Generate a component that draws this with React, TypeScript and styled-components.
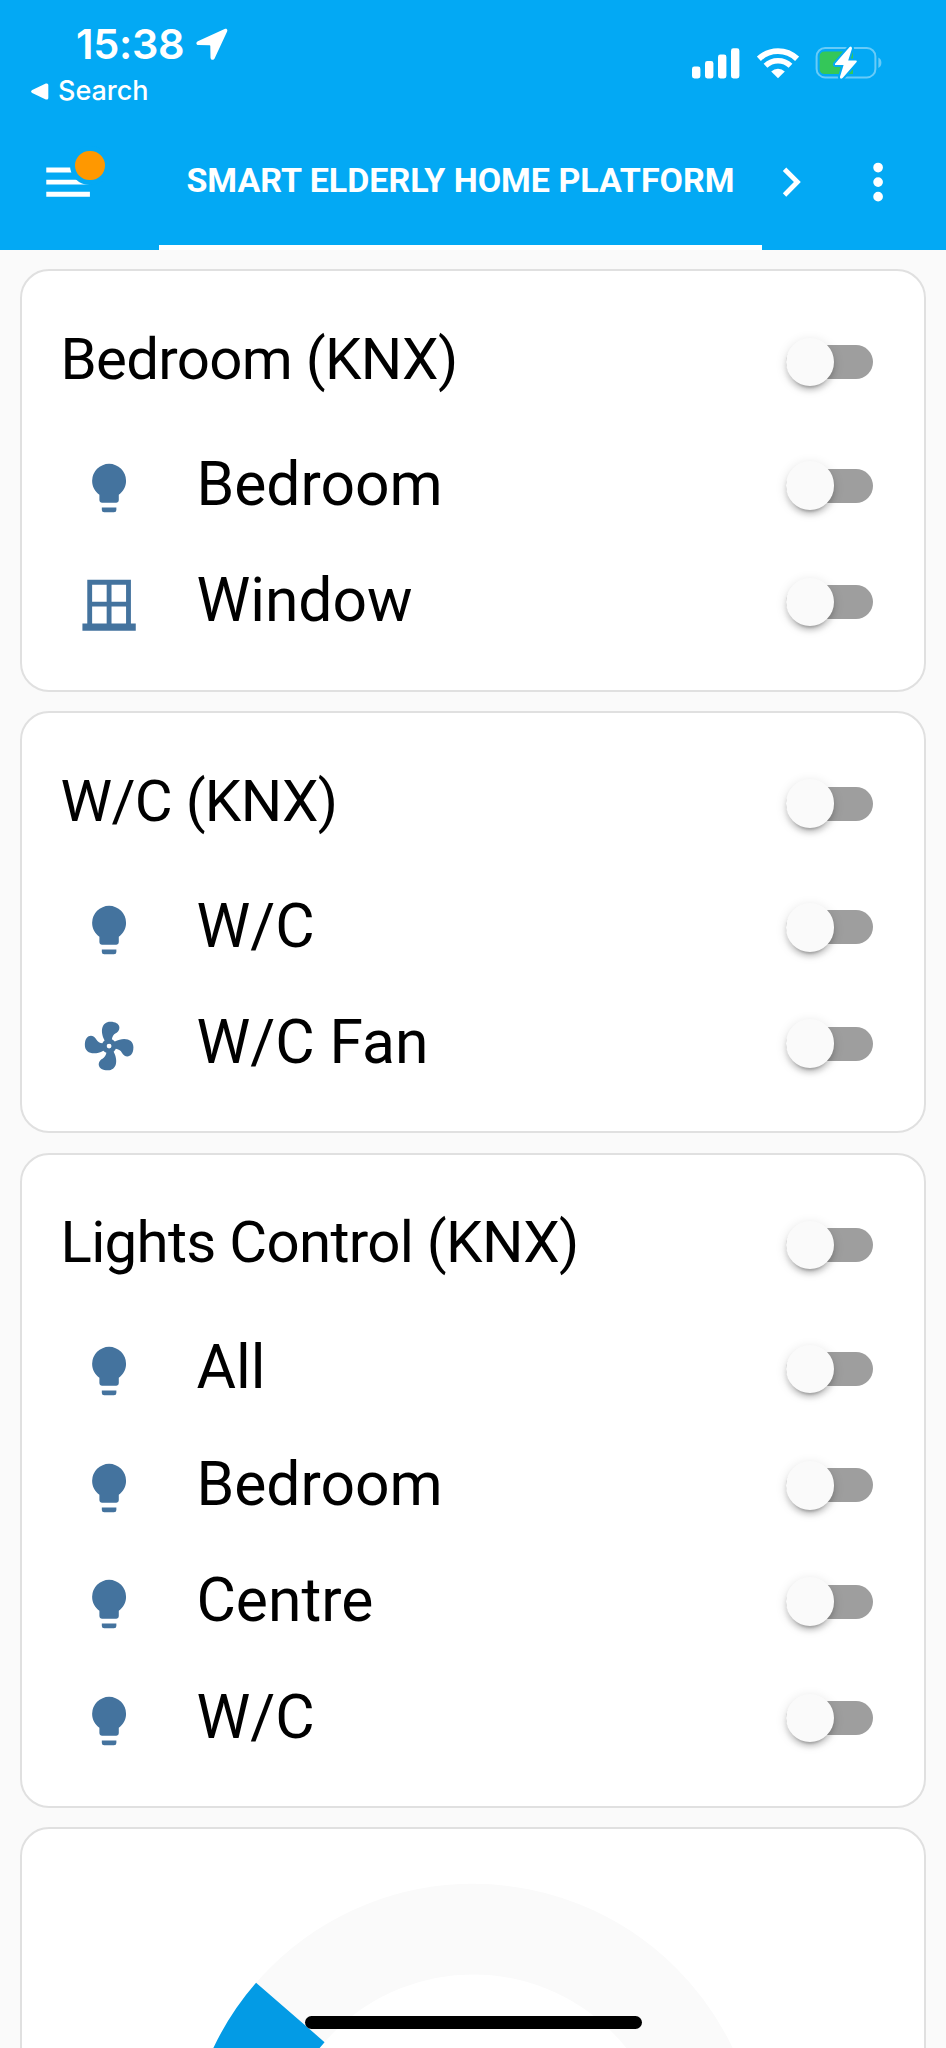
import React from "react";
import styled, { createGlobalStyle } from "styled-components";

const GlobalStyle = createGlobalStyle`
  *, *::before, *::after { box-sizing: border-box; }
  html, body { margin: 0; padding: 0; background: #fafafa; }
  body { font-family: Roboto, "Liberation Sans", sans-serif; color: #000; }
  svg { display: block; flex: none; }
`;

const Screen = styled.div`
  position: relative;
  width: 946px;
  height: 2048px;
  overflow: hidden;
  background: #fafafa;
`;

const Header = styled.header`
  height: 250px;
  background: #03a9f4;
  color: #fff;
`;

const StatusBar = styled.div`
  height: 114px;
  display: flex;
  justify-content: space-between;
  padding: 25px 63px 0 31px;
  font-family: Inter, "Liberation Sans", sans-serif;
`;

const Clock = styled.div`
  display: flex;
  align-items: center;
  gap: 12px;
  height: 38px;
  padding-left: 45px;
  font-size: 41.5px;
  font-weight: 600;
  line-height: 38px;
  letter-spacing: -0.3px;
`;

const BackLink = styled.div`
  display: flex;
  align-items: center;
  gap: 9px;
  height: 30px;
  margin-top: 13px;
  font-size: 27px;
  font-weight: 500;
  line-height: 30px;
  letter-spacing: -0.05px;
`;

const Indicators = styled.div`
  display: flex;
  align-items: center;
  height: 34px;
  margin-top: 21px;
`;

const Toolbar = styled.nav`
  height: 136px;
  display: flex;
  align-items: center;
`;

const MenuButton = styled.div`
  position: relative;
  width: 159px;
  padding-left: 38.7px;
`;

const Badge = styled.span`
  position: absolute;
  left: 70.2px;
  top: -7.1px;
  width: 39.4px;
  height: 39.4px;
  border-radius: 50%;
  border: 5px solid #03a9f4;
  background: #ff9800;
`;

const Tab = styled.div`
  width: 603px;
  height: 136px;
  padding-top: 1px;
  border-bottom: 5px solid #fff;
  display: flex;
  align-items: center;
  justify-content: center;
  font-size: 34px;
  font-weight: 700;
  white-space: nowrap;
`;

const Overflow = styled.div`
  margin-left: 28.6px;
`;

const Cards = styled.main`
  display: flex;
  flex-direction: column;
  gap: 19.4px;
  padding: 19.4px 20px 0;
`;

const Card = styled.section`
  border: 2.4px solid #e0e0e0;
  border-radius: 29px;
  background: #fff;
  padding: 25px 51px 29.5px 39.4px;
`;

const CardHeader = styled.div`
  height: 131px;
  display: flex;
  align-items: center;
  justify-content: space-between;
`;

const Title = styled.h1`
  margin: 0 0 0 -0.9px;
  padding-bottom: 6px;
  font-size: 58.2px;
  font-weight: 400;
  line-height: 72px;
  letter-spacing: -0.7px;
`;

const Row = styled.div`
  height: 116.4px;
  display: flex;
  align-items: center;
`;

const RowIcon = styled.div`
  width: 97px;
  padding: 5px 0 0 18.6px;
  margin-right: 38px;
`;

const Label = styled.div`
  flex: 1;
  padding-bottom: 1px;
  font-size: 60.6px;
  line-height: 72px;
`;

const Track = styled.div`
  width: 87.3px;
  height: 34px;
  border-radius: 17px;
  background: #9e9e9e;
  display: flex;
  align-items: center;
`;

const Thumb = styled.div`
  flex: none;
  width: 48.5px;
  height: 48.5px;
  border-radius: 50%;
  background: #fafafa;
  box-shadow: 0 7px 2.4px -5px rgba(0, 0, 0, 0.2), 0 5px 5px 0 rgba(0, 0, 0, 0.14),
    0 2.4px 12px 0 rgba(0, 0, 0, 0.12);
`;

const GaugeCard = styled(Card)`
  height: 700px;
  padding: 54px 0 0;
  display: flex;
  justify-content: center;
`;

const HomeIndicator = styled.div`
  position: absolute;
  left: 305px;
  top: 2016px;
  width: 337px;
  height: 12.6px;
  border-radius: 7px;
  background: #000;
`;

const paths = {
  bulb: "M12,2A7,7 0 0,0 5,9C5,11.38 6.19,13.47 8,14.74V17A1,1 0 0,0 9,18H15A1,1 0 0,0 16,17V14.74C17.81,13.47 19,11.38 19,9A7,7 0 0,0 12,2M9,21A1,1 0 0,0 10,22H14A1,1 0 0,0 15,21V20H9V21Z",
  window:
    "M21 20V2H3V20H1V23H23V20H21M19 11H13V4H19V11M11 4V11H5V4H11M5 20V13H11V20H5M13 20V13H19V20H13Z",
  fan: "M12,11A1,1 0 0,0 11,12A1,1 0 0,0 12,13A1,1 0 0,0 13,12A1,1 0 0,0 12,11M12.5,2C17,2 17.11,5.57 14.75,6.75C13.76,7.24 13.32,8.29 13.13,9.22C13.61,9.42 14.03,9.73 14.35,10.13C18.05,8.13 22.03,8.92 22.03,12.5C22.03,17 18.46,17.1 17.28,14.73C16.78,13.74 15.72,13.3 14.79,13.11C14.59,13.59 14.28,14 13.88,14.34C15.87,18.03 15.08,22 11.5,22C7,22 6.91,18.42 9.27,17.24C10.25,16.75 10.69,15.71 10.89,14.79C10.4,14.59 9.97,14.27 9.65,13.87C5.96,15.85 2,15.07 2,11.5C2,7 5.56,6.89 6.74,9.26C7.24,10.25 8.29,10.68 9.22,10.87C9.41,10.39 9.73,9.97 10.14,9.65C8.15,5.96 8.94,2 12.5,2Z",
  menu: "M3,6H21V8H3V6M3,11H21V13H3V11M3,16H21V18H3V16Z",
  chevron: "M8.59,16.58L13.17,12L8.59,7.41L10,6L16,12L10,18L8.59,16.58Z",
  dots: "M12,16A2,2 0 0,1 14,18A2,2 0 0,1 12,20A2,2 0 0,1 10,18A2,2 0 0,1 12,16M12,10A2,2 0 0,1 14,12A2,2 0 0,1 12,14A2,2 0 0,1 10,12A2,2 0 0,1 12,10M12,4A2,2 0 0,1 14,6A2,2 0 0,1 12,8A2,2 0 0,1 10,6A2,2 0 0,1 12,4Z",
};

type IconName = keyof typeof paths;

const Icon = ({ name, color = "#fff" }: { name: IconName; color?: string }) => (
  <svg width="58.2" height="58.2" viewBox="0 0 24 24" fill={color} fillRule="evenodd">
    <path d={paths[name]} />
  </svg>
);

const LocationArrow = () => (
  <svg width="32" height="33" viewBox="0 0 32 33" fill="#fff">
    <path d="M28.6 0.9 L1.8 13.2 C-0.3 14.3 0 17 2.4 17.1 L13.6 17.3 Q14.3 17.3 14.3 18 L14.5 29.4 C14.6 32.2 17.6 32.5 18.7 30.2 L31 3.8 C32 1.5 30.6 0 28.6 0.9Z" />
  </svg>
);

const BackTriangle = () => (
  <svg width="18" height="17" viewBox="0 0 18 17" fill="#fff">
    <path d="M1.2 7 L14.8 0.6 Q17.3 -0.2 17.3 2 V15 Q17.3 17.2 14.8 16.4 L1.2 10 Q-1 8.5 1.2 7Z" />
  </svg>
);

const Signal = () => (
  <svg width="48" height="31" viewBox="0 0 48 31" fill="#fff">
    <rect x="0" y="18.5" width="8.4" height="12" rx="2.4" />
    <rect x="13" y="13" width="8.4" height="17.5" rx="2.4" />
    <rect x="26" y="6.5" width="8.4" height="24" rx="2.4" />
    <rect x="39" y="0.3" width="8.4" height="30.2" rx="2.4" />
  </svg>
);

const WifiMark = styled.svg`
  margin-left: 17px;
`;

const Wifi = () => (
  <WifiMark width="42" height="31" viewBox="0 0 42 31" fill="none" stroke="#fff">
    <path d="M1.9 10.8 A27.4 27.4 0 0 1 40.1 10.8" strokeWidth="5.8" />
    <path d="M8.5 17.8 A17.9 17.9 0 0 1 33.5 17.8" strokeWidth="5.4" />
    <path d="M21 30.2 L14.2 23.6 A9.8 9.8 0 0 1 27.8 23.6Z" fill="#fff" stroke="none" />
  </WifiMark>
);

const BatteryMark = styled.svg`
  margin-left: 16px;
`;

const Battery = () => (
  <BatteryMark width="68" height="34" viewBox="0 0 68 34">
    <rect x="1.6" y="2" width="58.8" height="29.4" rx="8.5" fill="none" stroke="#68cbf8" strokeWidth="2" />
    <path d="M63.4 11.5 Q66.4 13 66.4 16.7 Q66.4 20.4 63.4 21.9Z" fill="#68cbf8" />
    <path d="M10 5.5 H38 V28 H10 Q4.7 28 4.7 23 V10.5 Q4.7 5.5 10 5.5Z" fill="#34c759" />
    <path
      d="M34.6 1 L20.2 17.6 Q19.4 19 21 19 H28.6 L24.9 31 Q25.2 34 27.6 32 L41.6 15.9 Q42.4 14.4 40.8 14.4 H33.2 L37 2.4 Q36.6 -0.6 34.6 1Z"
      fill="#fff"
      stroke="#03a9f4"
      strokeWidth="4"
      paintOrder="stroke"
    />
  </BatteryMark>
);

const Switch = () => (
  <Track role="switch" aria-checked="false">
    <Thumb />
  </Track>
);

const Gauge = () => (
  <svg width="576" height="576" viewBox="-288 -288 576 576" fill="none" strokeWidth="90.7">
    <path d="M-241.95 0 A241.95 241.95 0 0 1 241.95 0" stroke="#fafafa" />
    <path d="M-241.95 0 A241.95 241.95 0 0 1 -182.7 -158.6" stroke="#039be5" />
  </svg>
);

type Entity = { icon: IconName; name: string };

const groups: { title: string; entities: Entity[] }[] = [
  {
    title: "Bedroom (KNX)",
    entities: [
      { icon: "bulb", name: "Bedroom" },
      { icon: "window", name: "Window" },
    ],
  },
  {
    title: "W/C (KNX)",
    entities: [
      { icon: "bulb", name: "W/C" },
      { icon: "fan", name: "W/C Fan" },
    ],
  },
  {
    title: "Lights Control (KNX)",
    entities: [
      { icon: "bulb", name: "All" },
      { icon: "bulb", name: "Bedroom" },
      { icon: "bulb", name: "Centre" },
      { icon: "bulb", name: "W/C" },
    ],
  },
];

export default function App() {
  return (
    <Screen>
      <GlobalStyle />
      <Header>
        <StatusBar>
          <div>
            <Clock>
              15:38 <LocationArrow />
            </Clock>
            <BackLink>
              <BackTriangle /> Search
            </BackLink>
          </div>
          <Indicators>
            <Signal />
            <Wifi />
            <Battery />
          </Indicators>
        </StatusBar>
        <Toolbar>
          <MenuButton>
            <Icon name="menu" />
            <Badge />
          </MenuButton>
          <Tab>SMART ELDERLY HOME PLATFORM</Tab>
          <Icon name="chevron" />
          <Overflow>
            <Icon name="dots" />
          </Overflow>
        </Toolbar>
      </Header>
      <Cards>
        {groups.map((group) => (
          <Card key={group.title}>
            <CardHeader>
              <Title>{group.title}</Title>
              <Switch />
            </CardHeader>
            {group.entities.map((entity) => (
              <Row key={entity.name}>
                <RowIcon>
                  <Icon name={entity.icon} color="#44739e" />
                </RowIcon>
                <Label>{entity.name}</Label>
                <Switch />
              </Row>
            ))}
          </Card>
        ))}
        <GaugeCard>
          <Gauge />
        </GaugeCard>
      </Cards>
      <HomeIndicator />
    </Screen>
  );
}
